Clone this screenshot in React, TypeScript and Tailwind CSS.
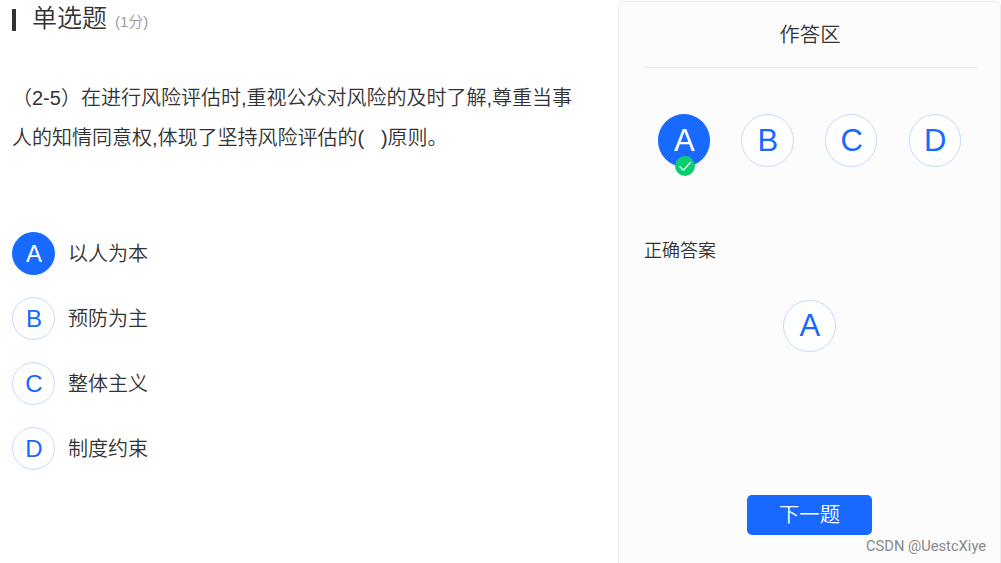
import clsx from "clsx";

interface Option {
  key: string;
  text: string;
}

const options: Option[] = [
  { key: "A", text: "以人为本" },
  { key: "B", text: "预防为主" },
  { key: "C", text: "整体主义" },
  { key: "D", text: "制度约束" },
];

const selected = "A";
const answer = "A";

interface BubbleProps {
  label: string;
  active?: boolean;
  large?: boolean;
}

function Bubble({ label, active, large }: BubbleProps) {
  return (
    <span
      className={clsx(
        "flex shrink-0 items-center justify-center rounded-full border leading-none",
        large ? "size-[52.5px] pl-px text-[31px]" : "size-[43px] pl-px text-[24px]",
        active
          ? "border-[#1769ff] bg-[#1769ff] text-white"
          : "border-[#c5d9fc] bg-white text-[#1769ff]"
      )}
    >
      {label}
    </span>
  );
}

function CheckBadge() {
  return (
    <span className="absolute top-[42px] left-[17px] flex size-5 items-center justify-center rounded-full bg-[#0bce70]">
      <svg width="20" height="20" viewBox="0 0 20 20" fill="none">
        <path d="M4.3 10.3 8.3 14.1 15.8 6.1" stroke="#fff" strokeWidth="1.3" />
      </svg>
    </span>
  );
}

export default function App() {
  return (
    <div className="relative flex h-[563px] w-[1001px] overflow-hidden bg-white font-['Liberation_Sans','Noto_Sans_CJK_SC',sans-serif] font-[350] text-[#333]">
      <main className="w-[618px] shrink-0 pl-3">
        <header className="flex h-10 items-start">
          <span className="mt-[9px] h-[22px] w-1 bg-[#333]" />
          <h1 className="ml-4 text-[25px] leading-[36px]">单选题</h1>
          <span className="ml-2 pt-[6px] text-[15px] leading-[32px] text-[#9b9b9b]">(1分)</span>
        </header>

        <p className="mt-[38px] text-[20px] leading-[40px] whitespace-pre">
          {"（2-5）在进行风险评估时,重视公众对风险的及时了解,尊重当事\n人的知情同意权,体现了坚持风险评估的(\u00a0 \u00a0)原则。"}
        </p>

        <ul className="mt-[74px] flex flex-col gap-[22px]">
          {options.map((option) => (
            <li key={option.key} className="flex items-center gap-[13px]">
              <Bubble label={option.key} active={option.key === selected} />
              <span className="text-[20px] leading-[40px]">{option.text}</span>
            </li>
          ))}
        </ul>
      </main>

      {/* Answer panel runs off the bottom edge */}
      <aside className="mt-px h-[580px] w-[383px] shrink-0 rounded-[5px] border border-[#ebebeb] bg-[#fcfcfc] pr-[23px] pl-[25px]">
        <h2 className="h-[66px] border-b border-[#e8e8e8] pr-px text-center text-[20.3px] leading-[66px]">作答区</h2>

        <div className="mt-[46px] ml-[13.5px] flex gap-[31.2px]">
          {options.map((option) => (
            <div key={option.key} className="relative">
              <Bubble label={option.key} active={option.key === selected} large />
              {option.key === selected && <CheckBadge />}
            </div>
          ))}
        </div>

        <h3 className="mt-[69.5px] text-[18px] leading-[30px]">正确答案</h3>
        <div className="mt-[33.5px] flex pl-[139px]">
          <Bubble label={answer} large />
        </div>

        <button className="mt-[143px] ml-[103px] h-10 w-[125px] rounded-[5px] bg-[#1769ff] text-[20.3px] leading-[40px] text-white">
          下一题
        </button>
      </aside>

      <span className="absolute top-[537px] left-[866px] font-['Roboto'] text-[14.7px] leading-[18px] font-normal text-[#888]">
        CSDN @UestcXiye
      </span>
    </div>
  );
}
